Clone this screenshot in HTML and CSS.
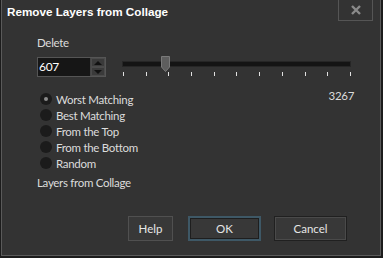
FILE: index.html
```html
<!DOCTYPE html>
<html lang="en">

<head>
    <meta charset="UTF-8">
    <title>Remove Layers from Collage</title>
    <link rel="stylesheet" href="styles.css">
</head>

<body>
    <!-- Dialog window -->
    <div class="window">
        <div class="titlebar">
            <span class="title">Remove Layers from Collage</span>
            <button class="close-btn" aria-label="Close">
                <svg width="12" height="12" viewBox="0 0 12 12">
                    <path d="M2 2 L10 10 M10 2 L2 10" stroke="#8a8a8a" stroke-width="2.4" />
                </svg>
            </button>
        </div>

        <div class="content">
            <div class="label">Delete</div>

            <!-- Spinbox and slider -->
            <div class="control-row">
                <div class="spinbox">
                    <span class="spin-value">607</span>
                    <div class="spin-buttons">
                        <div class="spin-btn"><span class="arrow-up"></span></div>
                        <div class="spin-btn"><span class="arrow-down"></span></div>
                    </div>
                </div>
                <div class="slider">
                    <div class="track"></div>
                    <svg class="thumb" width="9" height="16" viewBox="0 0 9 16">
                        <path d="M0.5 0.5 H8.5 V11 L4.5 15.5 L0.5 11 Z" fill="#5e5e5e" stroke="#7a7a7a" />
                    </svg>
                    <div class="ticks">
                        <span></span><span></span><span></span><span></span><span></span><span></span>
                        <span></span><span></span><span></span><span></span><span></span>
                    </div>
                </div>
            </div>

            <!-- Radio options -->
            <div class="options-row">
                <div class="radios">
                    <label class="radio"><span class="dot checked"></span>Worst Matching</label>
                    <label class="radio"><span class="dot"></span>Best Matching</label>
                    <label class="radio"><span class="dot"></span>From the Top</label>
                    <label class="radio"><span class="dot"></span>From the Bottom</label>
                    <label class="radio"><span class="dot"></span>Random</label>
                </div>
                <div class="max-value">3267</div>
            </div>

            <div class="label caption">Layers from Collage</div>
        </div>

        <!-- Dialog buttons -->
        <div class="buttons">
            <button class="btn help">Help</button>
            <button class="btn ok">OK</button>
            <button class="btn cancel">Cancel</button>
        </div>
    </div>
</body>

</html>
```

FILE: styles.css
```css
body {
    margin: 0;
    background-color: #1c1c1c;
    font-family: Lato, "Liberation Sans", sans-serif;
    font-size: 11.5px;
    letter-spacing: -0.3px;
    color: #dcdcdc;
}

.window {
    width: 380px;
    height: 256px;
    margin-left: 1px;
    background-color: #333333;
    border: 1px solid #5a5a5a;
    border-top: none;
    box-sizing: border-box;
    display: flex;
    flex-direction: column;
}

.titlebar {
    display: flex;
    justify-content: space-between;
    height: 22px;
}

.title {
    font-family: "Liberation Sans", sans-serif;
    font-weight: bold;
    font-size: 11.7px;
    letter-spacing: 0;
    color: #ffffff;
    padding: 5px 0 0 5px;
}

.close-btn {
    width: 35px;
    height: 21px;
    margin-right: 7px;
    background-color: #333333;
    border: 1px solid #555555;
    border-top: none;
    padding: 0;
    display: flex;
    align-items: center;
    justify-content: center;
}

.content {
    padding-left: 35px;
    display: flex;
    flex-direction: column;
}

.label {
    margin-top: 13px;
    line-height: 16px;
}

.control-row {
    display: flex;
    margin-top: 6px;
    height: 20px;
}

.spinbox {
    width: 69px;
    height: 20px;
    box-sizing: border-box;
    background-color: #161616;
    border: 1px solid #555555;
    display: flex;
    justify-content: space-between;
}

.spin-value {
    color: #ffffff;
    font-size: 12px;
    line-height: 18px;
    padding-left: 1px;
}

.spin-buttons {
    width: 14px;
    display: flex;
    flex-direction: column;
    border-left: 1px solid #444;
}

.spin-btn {
    flex: 1;
    background-color: #3a3a3a;
    border: 1px solid #4a4a4a;
    display: flex;
    align-items: center;
    justify-content: center;
}

.arrow-up {
    border-left: 4px solid transparent;
    border-right: 4px solid transparent;
    border-bottom: 4px solid #111;
}

.arrow-down {
    border-left: 4px solid transparent;
    border-right: 4px solid transparent;
    border-top: 4px solid #111;
}

.slider {
    position: relative;
    width: 229px;
    margin-left: 16px;
}

.track {
    margin-top: 4px;
    height: 4px;
    background-color: #141414;
    border: 1px solid #262626;
}

.thumb {
    position: absolute;
    left: 39px;
    top: -1px;
}

.ticks {
    display: flex;
    justify-content: space-between;
    margin-top: 5px;
    padding: 0 0 0 1px;
}

.ticks span {
    width: 1px;
    height: 4px;
    background-color: #e0e0e0;
}

.options-row {
    display: flex;
    justify-content: space-between;
    width: 317px;
    margin-top: 14px;
}

.radios {
    display: flex;
    flex-direction: column;
}

.radio {
    display: flex;
    align-items: center;
    height: 16px;
    gap: 4px;
    padding-left: 3px;
}

.dot {
    width: 12px;
    height: 12px;
    border-radius: 50%;
    background-color: #1b1b1b;
    display: flex;
    align-items: center;
    justify-content: center;
}

.dot.checked::after {
    content: "";
    width: 4px;
    height: 4px;
    border-radius: 50%;
    background-color: #8c8c8c;
}

.max-value {
    line-height: 16px;
    margin-top: -3px;
}

.caption {
    margin-top: 4px;
}

.buttons {
    display: flex;
    justify-content: flex-end;
    gap: 13px;
    margin-top: auto;
    margin-bottom: 14px;
    padding-right: 33px;
}

.btn {
    height: 25px;
    background-color: #383838;
    color: #e6e6e6;
    font-family: Lato, "Liberation Sans", sans-serif;
    font-size: 11.5px;
    border: 1px solid #505050;
}

.help {
    width: 45px;
    margin-right: 2px;
}

.ok {
    width: 73px;
    border: 2px solid #3e5866;
    box-shadow: inset 0 0 0 1px #1e1e1e;
}

.cancel {
    width: 73px;
    border: 1px solid #202020;
    box-shadow: inset 0 0 0 1px #4a4a4a;
}
```
